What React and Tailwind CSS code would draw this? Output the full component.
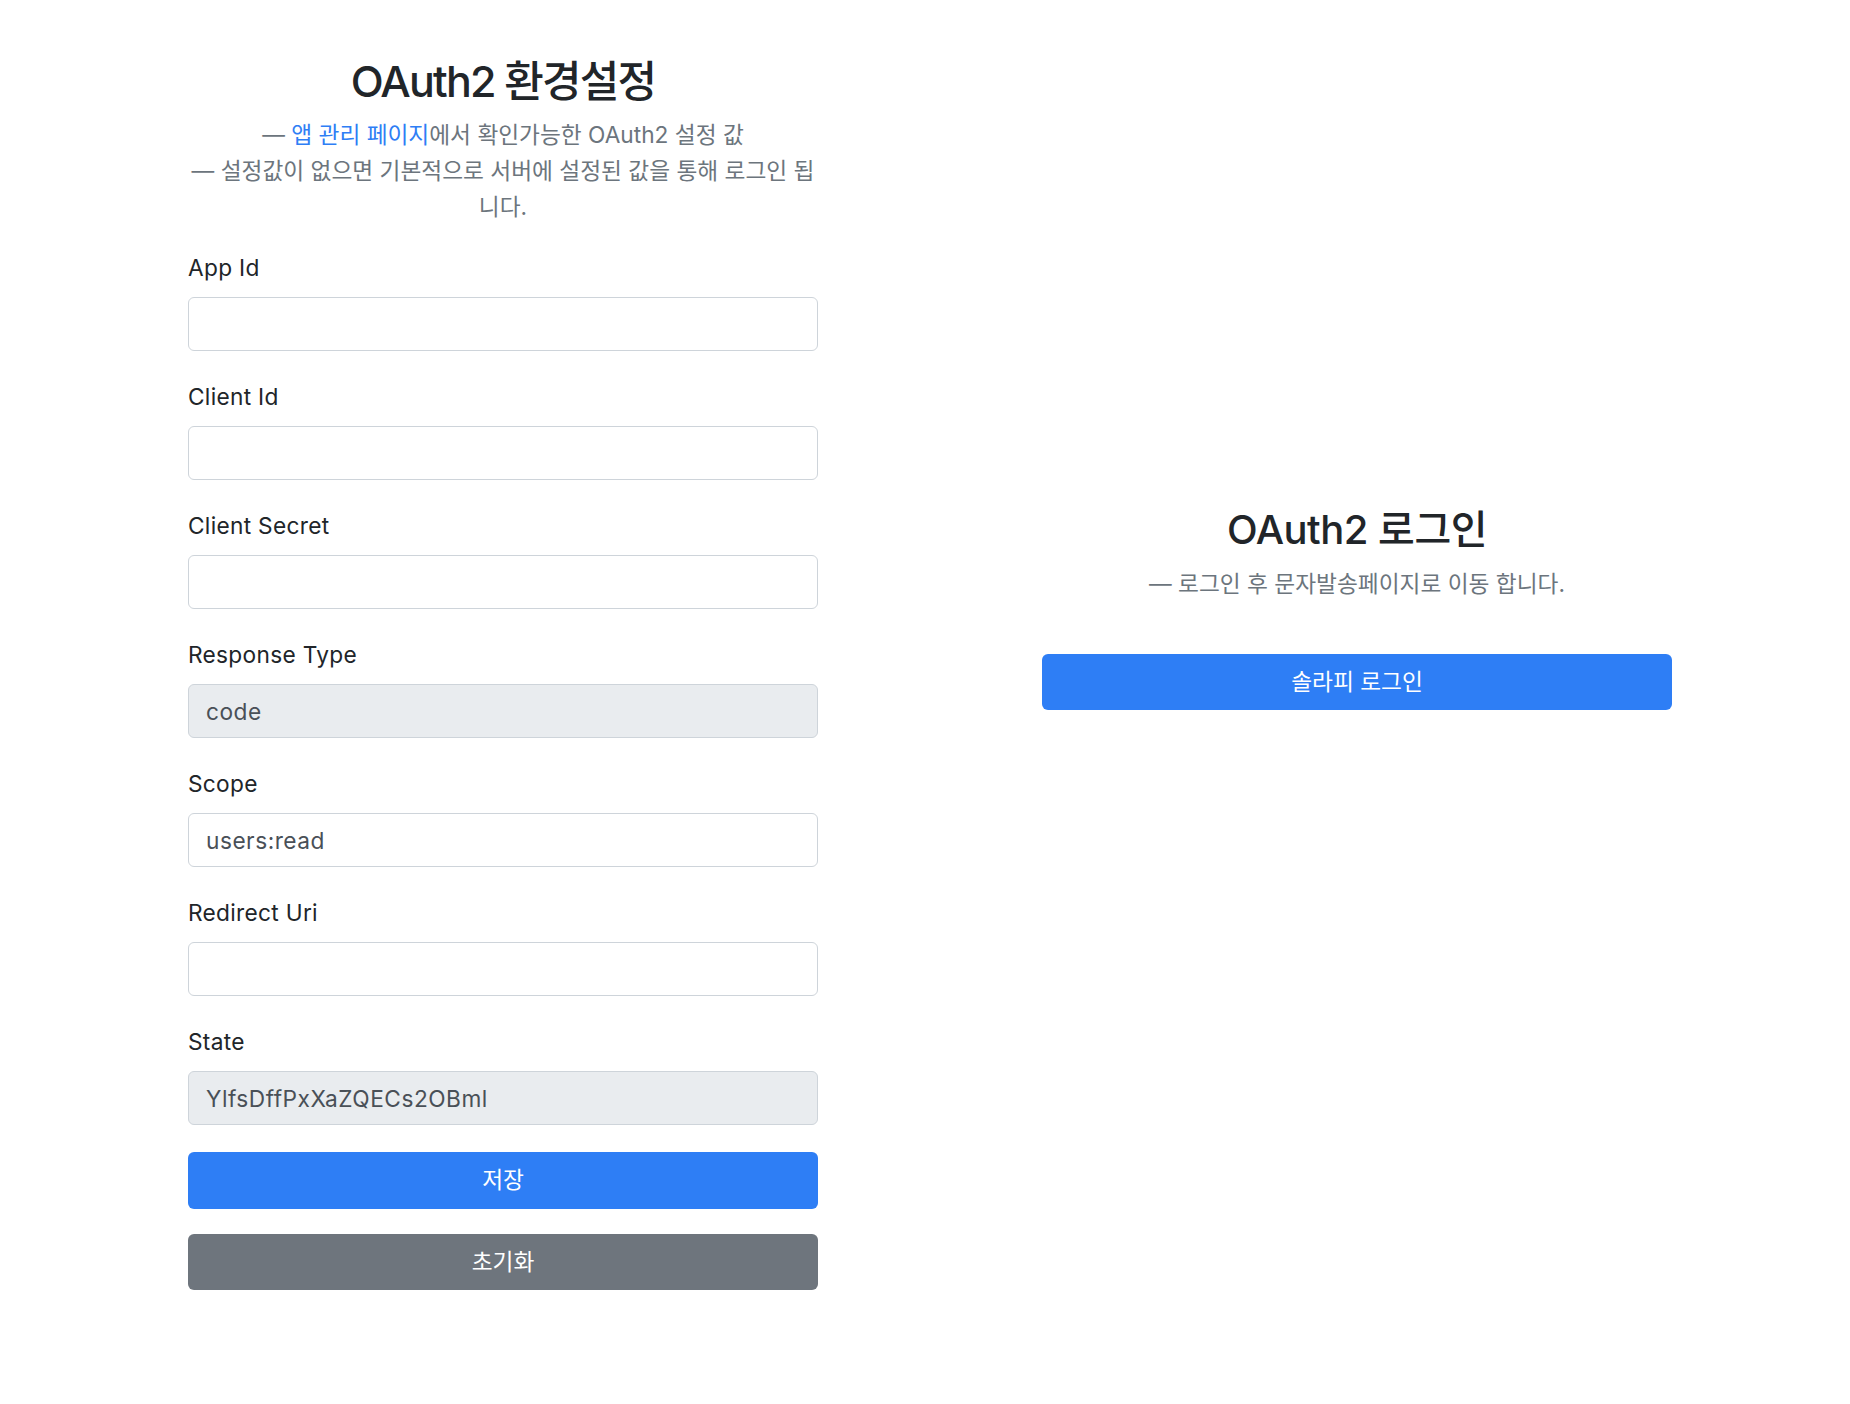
import React, { useState } from 'react';

const fields = [
    { label: 'App Id', value: '', disabled: false },
    { label: 'Client Id', value: '', disabled: false },
    { label: 'Client Secret', value: '', disabled: false },
    { label: 'Response Type', value: 'code', disabled: true },
    { label: 'Scope', value: 'users:read', disabled: false },
    { label: 'Redirect Uri', value: '', disabled: false },
    { label: 'State', value: 'YlfsDffPxXaZQECs2OBml', disabled: true },
];

function Field({ label, value, disabled }) {
    const [val, setVal] = useState(value);
    return (
        <div className="mb-[29px]">
            <label className="block text-[22.7px] leading-[34px] text-[#212529] tracking-[0.3px] mb-[12px]">{label}</label>
            <input
                type="text"
                value={val}
                disabled={disabled}
                onChange={(e) => setVal(e.target.value)}
                className={`block w-full h-[54px] px-[17px] text-[22.7px] tracking-[0.5px] text-[#495057] border-[1.5px] border-[#ced4da] rounded-[6px] outline-none ${
                    disabled ? 'bg-[#e9ecef]' : 'bg-white'
                }`}
            />
        </div>
    );
}

export default function App() {
    return (
        <div className="min-h-[1404px] bg-white font-[Inter,'Noto_Sans_CJK_KR',sans-serif]">
            <div className="flex items-start pl-[188px] gap-[224px] pt-[54px]">
                {/* 환경설정 */}
                <div className="w-[630px]">
                    <h2 className="text-center text-[43px] leading-[54px] font-medium text-[#212529] tracking-[-1.8px]">
                        OAuth2 환경설정
                    </h2>
                    <div className="mt-[9px] text-center text-[22.7px] leading-[36px] text-[#6c757d] -mx-4">
                        <p>
                            — <a href="#" className="text-[#2e7ef5]">앱 관리 페이지</a>에서 확인가능한 OAuth2 설정 값
                        </p>
                        <p>
                            — 설정값이 없으면 기본적으로 서버에 설정된 값을 통해 로그인 됩
                            <br />
                            니다.
                        </p>
                    </div>

                    <form className="mt-[26px]" onSubmit={(e) => e.preventDefault()}>
                        {fields.map((f) => (
                            <Field key={f.label} {...f} />
                        ))}
                        <button
                            type="submit"
                            className="-mt-[2px] block w-full h-[57px] rounded-[6px] bg-[#2e7ef5] text-white text-[22.7px]"
                        >
                            저장
                        </button>
                        <button
                            type="button"
                            className="mt-[25px] block w-full h-[56px] rounded-[6px] bg-[#6e757d] text-white text-[22.7px]"
                        >
                            초기화
                        </button>
                    </form>
                </div>

                {/* 로그인 */}
                <div className="w-[630px] pt-[452px]">
                    <h3 className="text-center text-[40px] leading-[48px] font-medium text-[#212529] tracking-[-0.5px]">
                        OAuth2 로그인
                    </h3>
                    <p className="mt-[13px] text-center text-[22.7px] leading-[34px] text-[#6c757d]">
                        — 로그인 후 문자발송페이지로 이동 합니다.
                    </p>
                    <button className="mt-[53px] block w-full h-[56px] rounded-[6px] bg-[#2e7ef5] text-white text-[22.7px]">
                        솔라피 로그인
                    </button>
                </div>
            </div>
        </div>
    );
}
